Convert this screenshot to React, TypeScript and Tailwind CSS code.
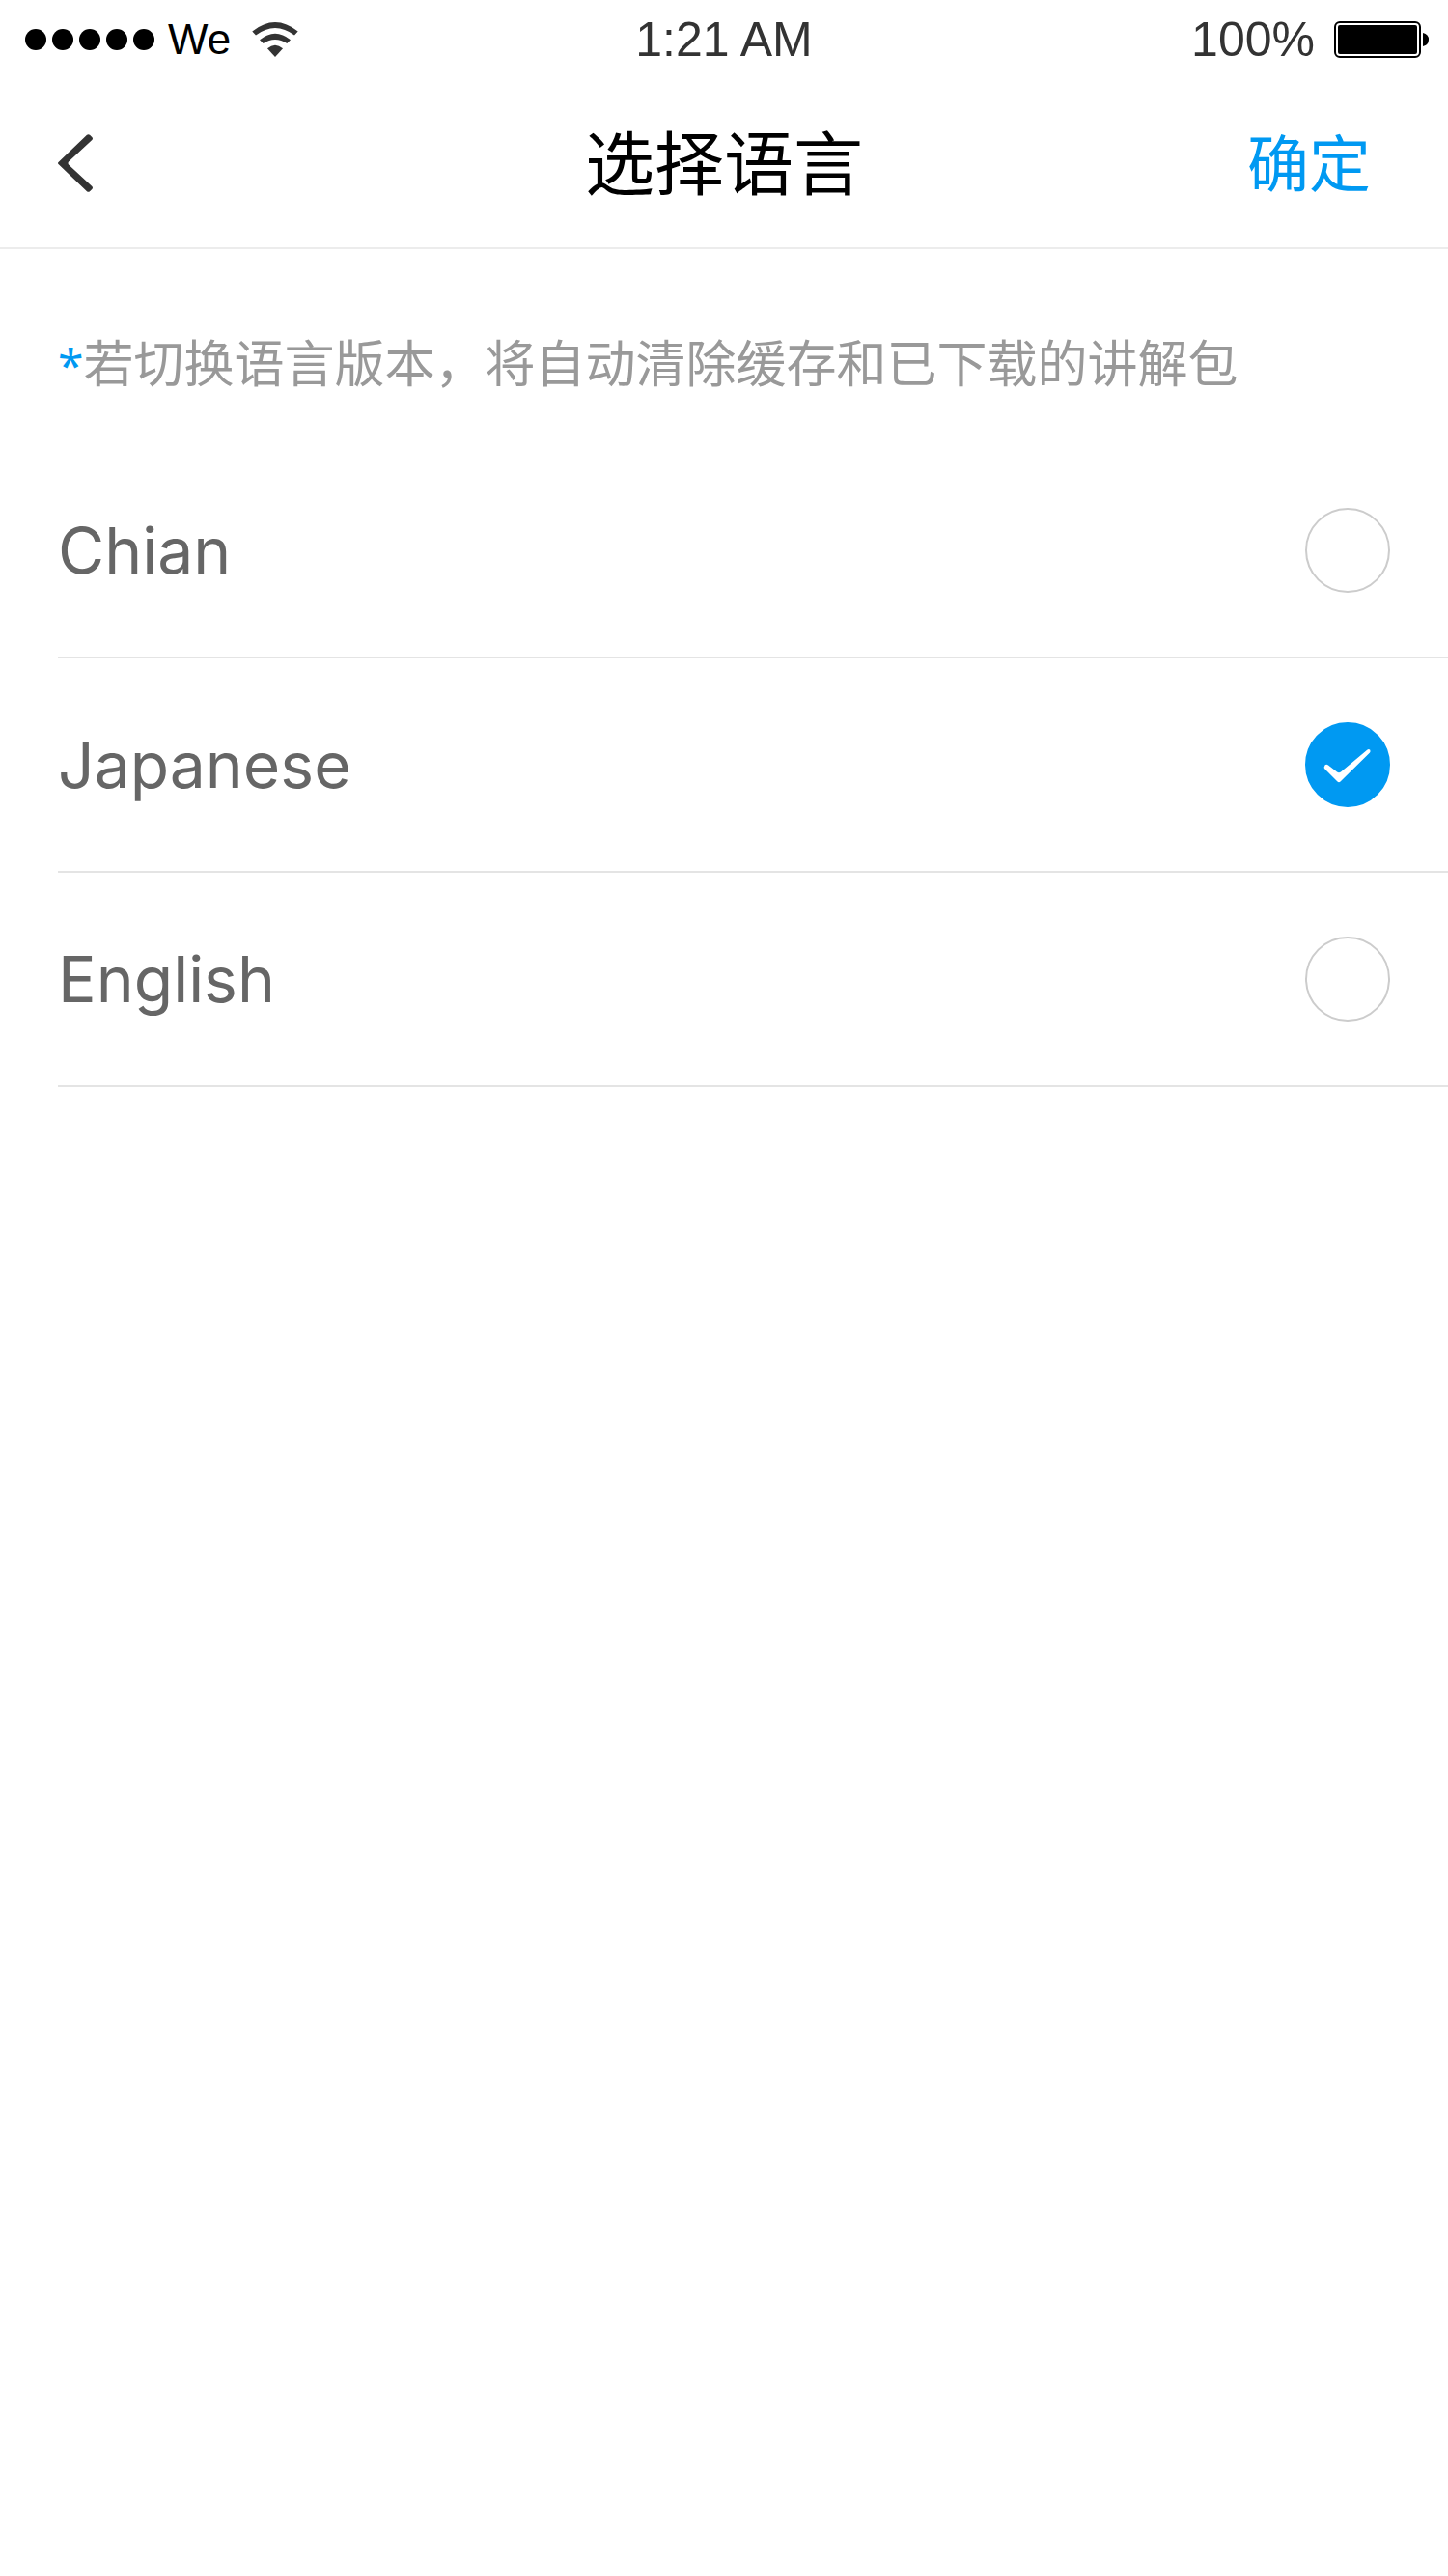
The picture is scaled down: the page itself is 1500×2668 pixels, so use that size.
import { useState } from "react";

const languages = ["Chian", "Japanese", "English"];

function WifiIcon() {
  return (
    <svg viewBox="0 0 48 36" className="h-9 w-12" fill="#333333" aria-hidden="true">
      <path d="M0.3 9.5Q24 -9.5 47.7 9.5L44 13.5Q24 -1.5 4 13.5Z" />
      <path d="M8 18.3Q24 5.1 40 18.3L36.3 22Q24 14 11.7 22Z" />
      <path d="M16 27.3Q24 20 32 27.3L24 36Z" />
    </svg>
  );
}

function BatteryIcon() {
  return (
    <svg viewBox="0 0 98 38" className="h-[38px] w-[98px]" aria-hidden="true">
      <rect x="1" y="1" width="88" height="36" rx="5" fill="none" stroke="#000" strokeWidth="2" />
      <rect x="4" y="4" width="82" height="30" rx="2" fill="#000" />
      <path d="M92 12Q98 13.5 98 19Q98 24.500 92 26Z" fill="#000" />
    </svg>
  );
}

function StatusBar() {
  return (
    <div className="grid h-[82px] grid-cols-3 items-center px-5 font-['Liberation_Sans',sans-serif] text-[50px] leading-[80px] text-[#333333]">
      <div className="flex items-center pl-1.5">
        <div className="flex gap-1.5">
          {[0, 1, 2, 3, 4].map((dot) => (
            <span key={dot} className="size-[22px] rounded-full bg-black" />
          ))}
        </div>
        <span className="ml-3.5 text-[44px] text-black">We</span>
        <span className="ml-[22px]">
          <WifiIcon />
        </span>
      </div>
      <span className="text-center">1:21 AM</span>
      <div className="flex items-center justify-end gap-5">
        <span>100%</span>
        <BatteryIcon />
      </div>
    </div>
  );
}

function NavBar() {
  return (
    <header className="grid h-44 grid-cols-[1fr_auto_1fr] items-center border-b-2 border-[#ececec] pr-20 pl-[60px] font-['Noto_Sans_CJK_SC',sans-serif]">
      <button type="button" aria-label="返回" className="justify-self-start">
        <svg viewBox="0 0 36 60" className="h-[60px] w-9" aria-hidden="true">
          <path
            d="M0.500 29L30 0.800Q31.500 -0.500 33 0.800L35.300 3Q36.700 4.500 35.300 6L11 28.500Q10 30 11 31.500L35.300 54Q36.700 55.500 35.300 57L33 59.200Q31.500 60.500 30 59.200L0.500 31Q-0.500 30 0.500 29Z"
            fill="#333333"
          />
        </svg>
      </button>
      <h1 className="pb-2 pl-5 text-[72px] leading-[80px] text-black">选择语言</h1>
      <button type="button" className="justify-self-end pb-2 text-[64px] leading-[80px] text-[#0099f2]">
        确定
      </button>
    </header>
  );
}

export default function App() {
  const [selected, setSelected] = useState("Japanese");

  return (
    <div className="min-h-screen bg-white">
      <StatusBar />
      <NavBar />
      <main>
        <p className="px-[60px] pt-[84px] pb-[50px] font-['Noto_Sans_CJK_SC',sans-serif] text-[52px] leading-[64px] text-[#999999]">
          <span className="font-['Noto_Sans',sans-serif] text-[48px] text-[#0099f2]">*</span>
          若切换语言版本，将自动清除缓存和已下载的讲解包
        </p>
        <div role="radiogroup" aria-label="选择语言" className="pl-[60px]">
          {languages.map((language) => (
            <label
              key={language}
              className="flex h-[222px] items-center justify-between border-b-2 border-[#e4e4e4] pr-[60px] font-['Inter',sans-serif] text-[66px] text-[#666666]"
            >
              {language}
              <span className="relative size-[88px]">
                <input
                  type="radio"
                  name="language"
                  value={language}
                  checked={selected === language}
                  onChange={() => setSelected(language)}
                  className="peer block size-full appearance-none rounded-full border-2 border-[#cccccc] checked:border-[#0099f2] checked:bg-[#0099f2]"
                />
                <svg
                  viewBox="0 0 88 88"
                  className="pointer-events-none absolute inset-0 hidden size-full peer-checked:block"
                  fill="#fff"
                  aria-hidden="true"
                >
                  <path d="M20.500 44.500Q22 43 24 44.500L33 51.500Q35 53 37 51.500L64.500 28.500Q66 27.500 67.300 28.800Q68 30.300 67 31.500L36.500 61.500Q35 63 33.500 61.500L20.500 48.500Q19 46.500 20.500 44.500Z" />
                </svg>
              </span>
            </label>
          ))}
        </div>
      </main>
    </div>
  );
}
